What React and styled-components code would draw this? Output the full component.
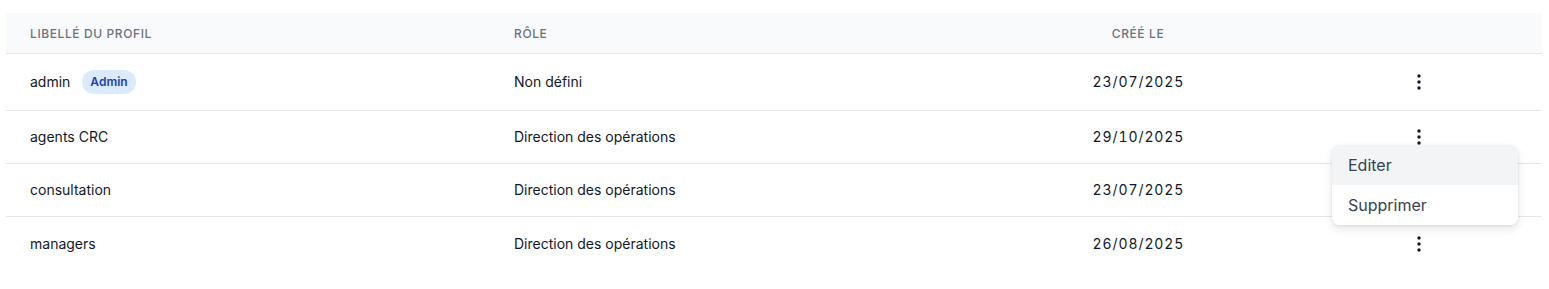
import React from "react";
import styled, { createGlobalStyle } from "styled-components";

const Global = createGlobalStyle`
  html, body { margin: 0; padding: 0; background: #ffffff; }
  body { font-family: Inter, "Noto Sans", sans-serif; color: #111827; }
`;

const Page = styled.div`
  padding: 13px 7px 0 6px;
`;

const Table = styled.div`
  display: grid;
  grid-template-columns: 484px 491px 314px 247px;
  width: 1536px;
`;

const HeadCell = styled.div`
  background: #f9fafb;
  height: 41px;
  box-sizing: border-box;
  border-bottom: 1px solid #e5e7eb;
  display: flex;
  align-items: center;
  justify-content: ${(p) => (p.$center ? "center" : "flex-start")};
  padding: 0 24px;
  font-size: 12px;
  font-weight: 500;
  letter-spacing: 0.05em;
  text-transform: uppercase;
  color: #6b7280;
`;

const Cell = styled.div`
  position: relative;
  box-sizing: border-box;
  min-height: 53px;
  padding: 16px 24px;
  display: flex;
  align-items: center;
  gap: 12px;
  justify-content: ${(p) => (p.$center ? "center" : "flex-start")};
  border-bottom: ${(p) => (p.$last ? "none" : "1px solid #e5e7eb")};
  font-size: 14px;
  line-height: 20px;
  color: #111827;
`;

const DateText = styled.span`
  font-variant-numeric: tabular-nums;
  letter-spacing: 0.9px;
  margin-right: -0.9px;
`;

const Badge = styled.span`
  display: inline-flex;
  align-items: center;
  height: 24px;
  padding: 0 8px;
  border-radius: 999px;
  background: #dbeafe;
  color: #1e40af;
  font-size: 12px;
  font-weight: 600;
`;

const KebabButton = styled.button`
  border: none;
  background: transparent;
  padding: 0;
  width: 20px;
  height: 20px;
  display: flex;
  align-items: center;
  justify-content: center;
  color: #111827;
  cursor: pointer;
`;

const Menu = styled.div`
  position: absolute;
  top: 34px;
  right: 24px;
  width: 186px;
  background: #ffffff;
  border-radius: 8px;
  box-shadow: 0 4px 10px rgba(17, 24, 39, 0.1), 0 1px 3px rgba(17, 24, 39, 0.08);
  overflow: hidden;
  z-index: 10;
`;

const MenuItem = styled.div`
  height: 40px;
  display: flex;
  align-items: center;
  padding: 0 16px;
  font-size: 16px;
  color: #374151;
  background: ${(p) => (p.$active ? "#f3f4f6" : "#ffffff")};
`;

const Dots = () => (
  <svg width="20" height="20" viewBox="0 0 20 20">
    <circle cx="10" cy="4" r="1.7" fill="currentColor" />
    <circle cx="10" cy="10" r="1.7" fill="currentColor" />
    <circle cx="10" cy="16" r="1.7" fill="currentColor" />
  </svg>
);

const rows = [
  { name: "admin", badge: "Admin", role: "Non défini", date: "23/07/2025" },
  { name: "agents CRC", role: "Direction des opérations", date: "29/10/2025", open: true },
  { name: "consultation", role: "Direction des opérations", date: "23/07/2025" },
  { name: "managers", role: "Direction des opérations", date: "26/08/2025" },
];

export default function App() {
  return (
    <Page>
      <Global />
      <Table>
        <HeadCell>Libellé du profil</HeadCell>
        <HeadCell>Rôle</HeadCell>
        <HeadCell $center>Créé le</HeadCell>
        <HeadCell />
        {rows.map((r, i) => {
          const last = i === rows.length - 1;
          return (
            <React.Fragment key={r.name}>
              <Cell $last={last}>
                {r.name}
                {r.badge && <Badge>{r.badge}</Badge>}
              </Cell>
              <Cell $last={last}>{r.role}</Cell>
              <Cell $last={last} $center>
                <DateText>{r.date}</DateText>
              </Cell>
              <Cell $last={last} $center>
                <KebabButton aria-label="Actions">
                  <Dots />
                </KebabButton>
                {r.open && (
                  <Menu>
                    <MenuItem $active>Editer</MenuItem>
                    <MenuItem>Supprimer</MenuItem>
                  </Menu>
                )}
              </Cell>
            </React.Fragment>
          );
        })}
      </Table>
    </Page>
  );
}
